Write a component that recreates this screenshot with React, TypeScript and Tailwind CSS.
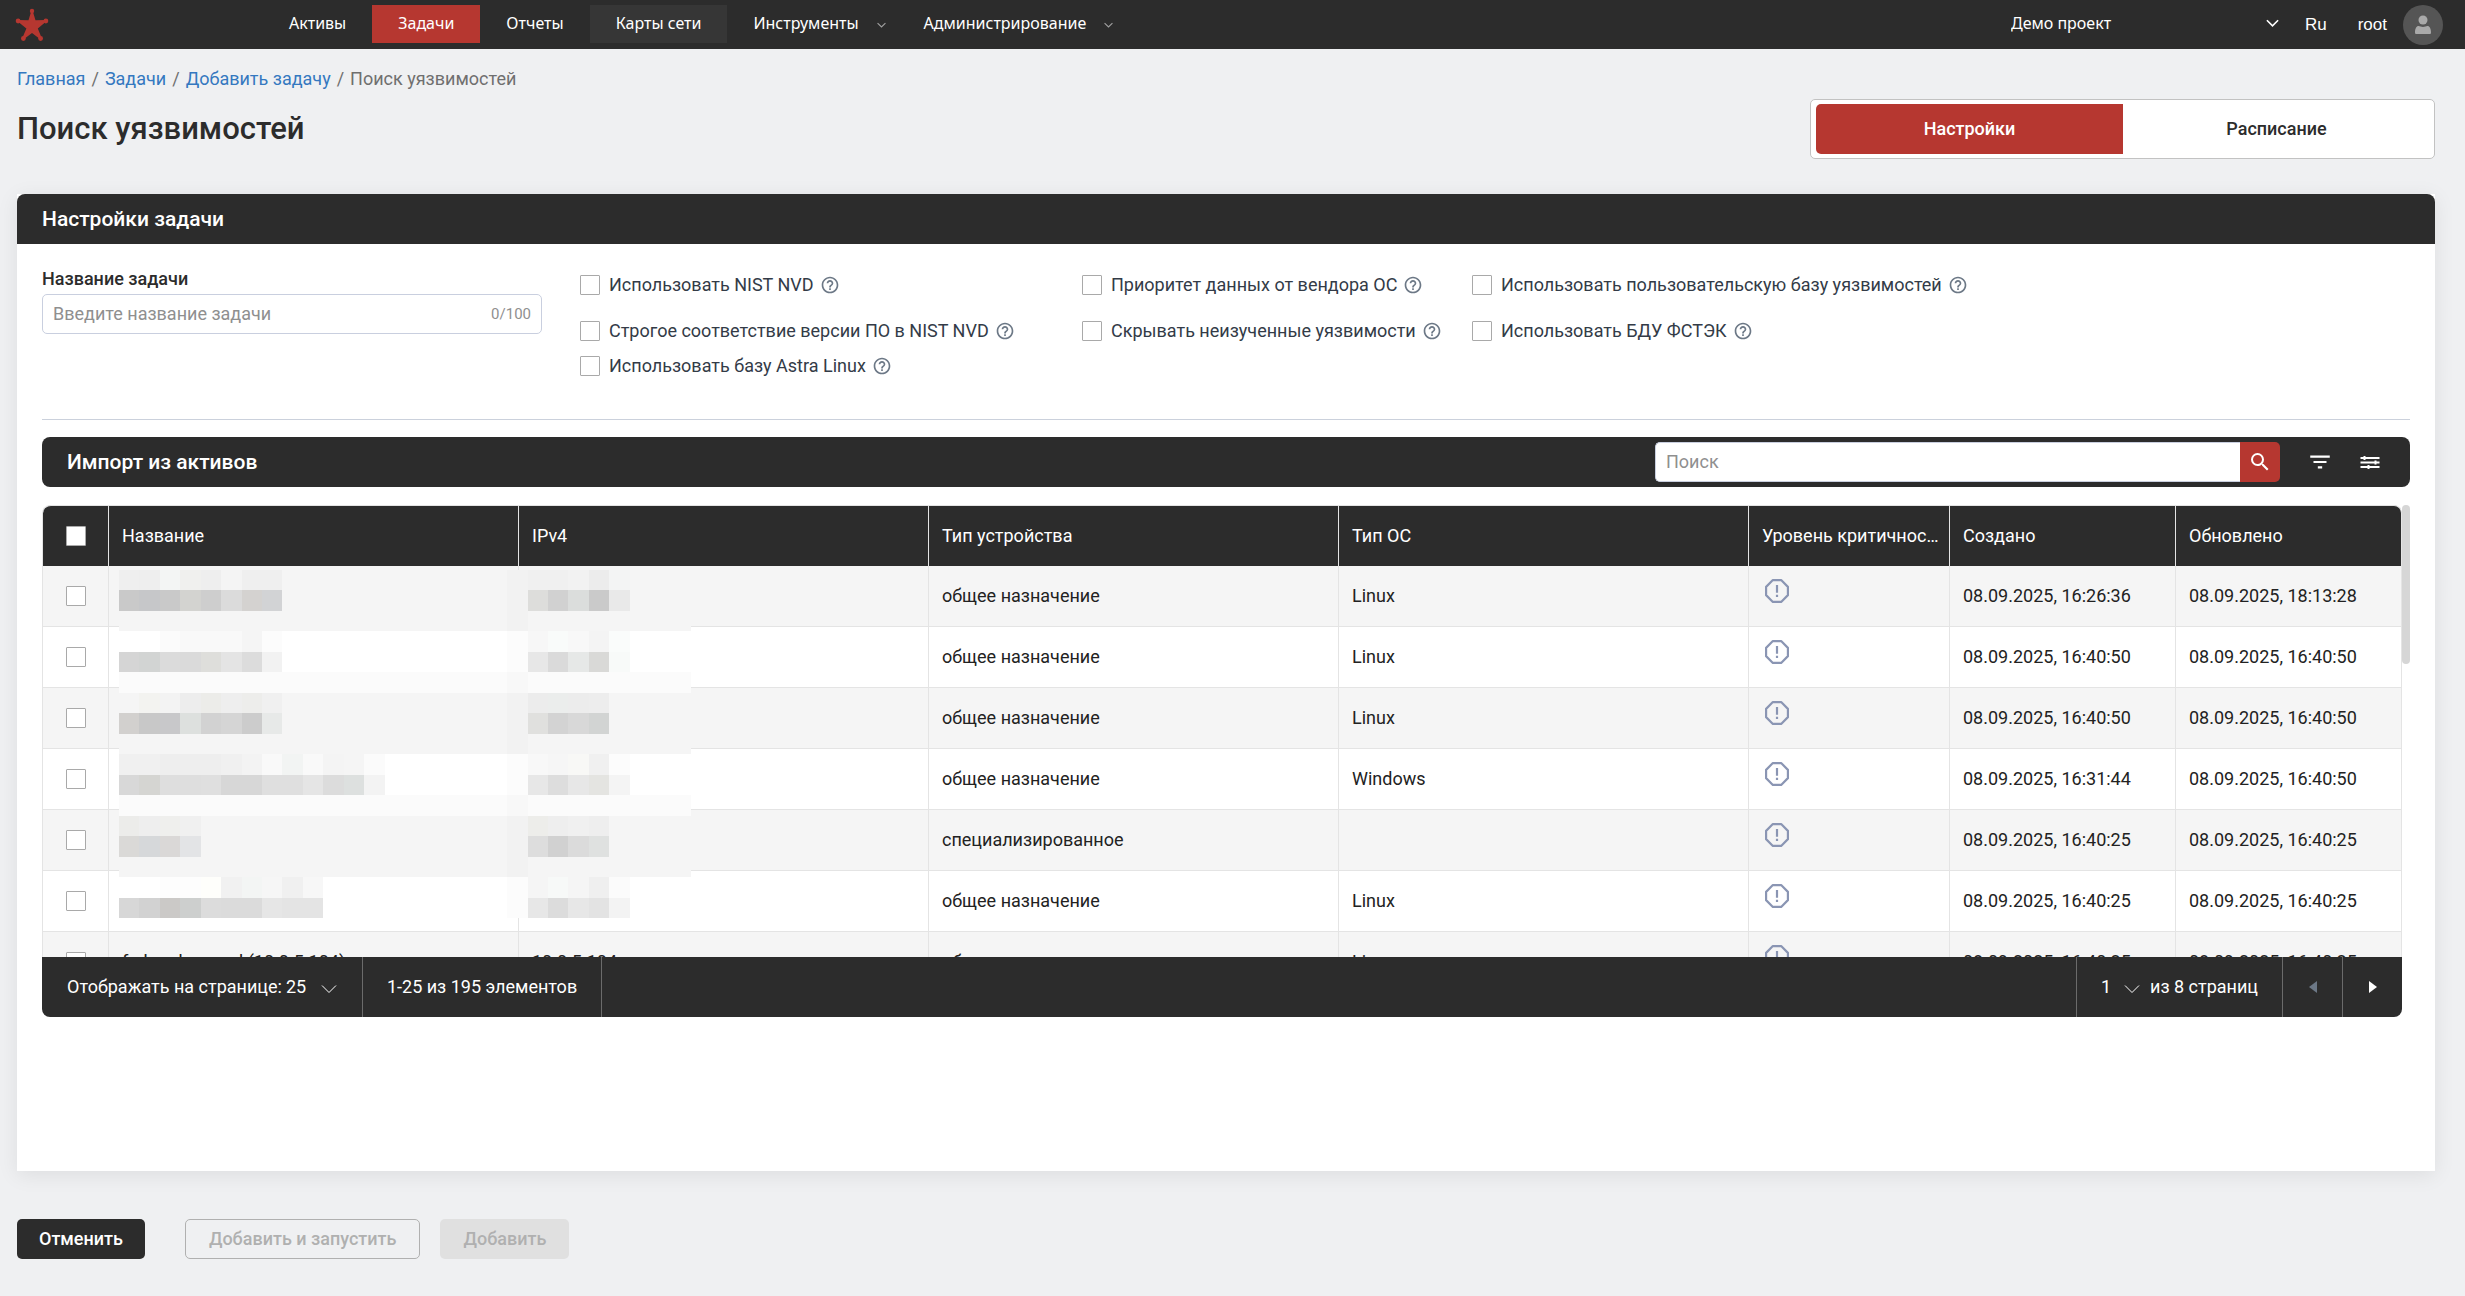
import React from 'react';
import { MdFilterList, MdHelpOutline, MdSearch } from 'react-icons/md';

type Asset = {
  name: string;
  ip: string;
  device: string;
  os: string;
  created: string;
  updated: string;
};

const assets: Asset[] = [
  { name: '', ip: '', device: 'общее назначение', os: 'Linux', created: '08.09.2025, 16:26:36', updated: '08.09.2025, 18:13:28' },
  { name: '', ip: '', device: 'общее назначение', os: 'Linux', created: '08.09.2025, 16:40:50', updated: '08.09.2025, 16:40:50' },
  { name: '', ip: '', device: 'общее назначение', os: 'Linux', created: '08.09.2025, 16:40:50', updated: '08.09.2025, 16:40:50' },
  { name: '', ip: '', device: 'общее назначение', os: 'Windows', created: '08.09.2025, 16:31:44', updated: '08.09.2025, 16:40:50' },
  { name: '', ip: '', device: 'специализированное', os: '', created: '08.09.2025, 16:40:25', updated: '08.09.2025, 16:40:25' },
  { name: '', ip: '', device: 'общее назначение', os: 'Linux', created: '08.09.2025, 16:40:25', updated: '08.09.2025, 16:40:25' },
  { name: 'fedora-bronzed (10.0.5.104)', ip: '10.0.5.104', device: 'общее назначение', os: 'Linux', created: '08.09.2025, 16:40:25', updated: '08.09.2025, 16:40:25' },
];

const columns = ['Название', 'IPv4', 'Тип устройства', 'Тип ОС', 'Уровень критичности', 'Создано', 'Обновлено'];

const checks = [
  'Использовать NIST NVD',
  'Приоритет данных от вендора ОС',
  'Использовать пользовательскую базу уязвимостей',
  'Строгое соответствие версии ПО в NIST NVD',
  'Скрывать неизученные уязвимости',
  'Использовать БДУ ФСТЭК',
  'Использовать базу Astra Linux',
];

// Privacy mosaic: [background, name tiles, address tiles] for every strip.
const mosaic: [string, string, string][] = [
  ['f5f5f5', 'efefef eeeeee f3f5f4 f0f0ee eeeeee f4f4f4 efefef efefef', 'f0f0f0 f0f0f0 f2f2f2 ececec f3f4f4'],
  ['f5f5f5', 'c9c9c9 c6c7c9 c9c9c9 d3d3d0 cecece dbdbdb d4d2d0 d2d3d5', 'dddddb d1d1d1 dbdddc cacaca e9e9e9'],
  ['f5f5f5', '', ''],
  ['ffffff', 'ffffff ffffff fbfbfb f9f9f9 f9f9f9 f9f9f9 f5f5f5 fcfcfc', 'f7f7f7 f9fbfa f8f8f8 f4f4f4 fafcfb'],
  ['ffffff', 'd5d5d5 d2d4d3 dbdbdb dadada dededb e4e4e4 dcdcdc f2f2f2', 'e7e7e7 dadada e6e8e7 d9d9d7 f8faf9'],
  ['fbfbfb', '', ''],
  ['f5f5f5', 'f5f5f5 f3f3f0 f3f3f3 ededed ecece9 eeeeee ededeb f0f0f0', 'ececec ebedec ececec ededed'],
  ['f5f5f5', 'd2d0ce c8c8c8 c8c8ca dde0de d2d2d2 d5d5d5 cccccc e7e9e8', 'e0e0de d3d3d3 d8d8d8 d2d4d3'],
  ['f5f5f5', '', ''],
  ['ffffff', 'f0f0f0 f0f0f0 eeeeee eeeeee eeeeee f0f0f0 f3f3f3 f9f9f9 f2f4f3 f9f9f9 f4f4f4 f5f5f5 fbfbfb', 'f8f8f8 f6f6f6 f8f8f6 f0f0f0 fcfcfc'],
  ['ffffff', 'd8d8d8 d5d5d2 dedede dedede dfdfdf d7d7d7 d7d7d7 dfdfdf dfdfdf e5e5e5 dcdcdc dde0df f3f3f3', 'e7e7e7 dddddd e7e7e7 e4e4e1 f4f4f4'],
  ['fbfbfb', '', ''],
  ['f5f5f5', 'ececea eeeeee efefed f0f0f0', 'ededea eeeeee f0f0f0 eeeeee'],
  ['f5f5f5', 'dad9d7 d6d8da dad8d7 e3e4e6', 'dddddd d1d1d1 dbdbdb dfe1e0'],
  ['f5f5f5', '', ''],
  ['ffffff', 'ffffff ffffff fdfdfd fdfdfd fefefb f1f1f1 f3f5f4 f6f6f6 f0f0f0 f7f7f7', 'f5f5f5 f7f9f8 f5f5f5 efefef fbfbfb'],
  ['ffffff', 'd7d7d7 d2d2d2 cbc9c7 cdcfce dcdcdc dbdbdb dbdbdb e6e6e6 e4e4e4 e4e4e4', 'e7e7e7 dcdcdc e7e7e7 e3e3e3 f3f3f3'],
];

function Mosaic() {
  return (
    <svg
      className="pointer-events-none absolute left-[77px] top-[65px] h-[348px] w-[572px]"
      viewBox="0 0 28 17"
      preserveAspectRatio="none"
      shapeRendering="crispEdges"
      aria-hidden="true"
    >
      {mosaic.map(([bg, names, ips], y) => (
        <g key={y}>
          <rect x={0} y={y} width={28} height={1} fill={'#' + bg} />
          <rect x={19} y={y} width={1} height={1} fill="#000" opacity={0.012} />
          {names.split(' ').filter(Boolean).map((c, x) => (
            <rect key={'n' + x} x={x} y={y} width={1} height={1} fill={'#' + c} />
          ))}
          {ips.split(' ').filter(Boolean).map((c, x) => (
            <rect key={'i' + x} x={20 + x} y={y} width={1} height={1} fill={'#' + c} />
          ))}
        </g>
      ))}
    </svg>
  );
}

function Chevron({ className, stroke = 1 }: { className: string; stroke?: number }) {
  return (
    <svg className={className} viewBox="0 0 16 10" fill="none" stroke="currentColor" strokeWidth={stroke} aria-hidden="true">
      <path d="M1 1.5 8 8.5 15 1.5" />
    </svg>
  );
}

function Logo() {
  return (
    <svg className="h-[34px] w-[34px] text-[#b63730]" viewBox="0 0 34 34" fill="currentColor" aria-hidden="true">
      <path d="M16.3 3h1.4l2.800 9.300 10.400-.2.3 1.500-8.400 6.900 4.200 10.200-1.400.9L17 25l-8.600 6.600-1.400-.9 4.400-10.200-8.600-6.900.4-1.500 10.300.2z" />
      <circle cx="17" cy="3" r="2.200" />
      <circle cx="3.100" cy="13" r="2.400" />
      <circle cx="30.900" cy="13" r="2.400" />
      <circle cx="8.400" cy="30.500" r="2.400" />
      <circle cx="25.600" cy="30.500" r="2.400" />
    </svg>
  );
}

function Octagon() {
  return (
    <svg className="h-6 w-6 text-[#8a95b3]" viewBox="1 1 22 22" fill="none" stroke="currentColor" strokeWidth="2" role="img" aria-label="Не определён">
      <path d="M8.200 2h7.600L22 8.200v7.600L15.800 22H8.200L2 15.800V8.200z" strokeLinejoin="round" />
      <path d="M12 6.500v7M12 15.500v2" />
    </svg>
  );
}

function Check({ label }: { label: string }) {
  return (
    <input
      type="checkbox"
      aria-label={label}
      className="block h-5 w-5 shrink-0 appearance-none rounded-[1px] border border-[#a9a9a9] bg-white checked:bg-[#b63730]"
    />
  );
}

function NavItem({ label, tone = '', menu = false }: { label: string; tone?: string; menu?: boolean }) {
  if (menu) {
    return (
      <button type="button" className="flex h-[38px] items-center gap-[18px] pb-[3px] pl-[26px] pr-3">
        {label}
        <Chevron className="mt-1 h-[6px] w-[9px] text-[#a0a0a0]" stroke={2} />
      </button>
    );
  }
  return (
    <a href="#" className={'flex h-[38px] items-center px-[26px] pb-[3px] ' + tone}>
      {label}
    </a>
  );
}

const cell = 'border-b border-r border-[#e4e4e4] px-[13px]';

export default function App() {
  return (
    <div className="min-h-screen bg-[#eff0f2] pb-9 font-['Roboto','Liberation_Sans',sans-serif] text-lg leading-6 text-[#2c2c2c]">
      <header className="flex h-[49px] items-center bg-[#2c2c2c] pl-[15px] pr-[22px] font-['Noto_Sans','Open_Sans',sans-serif] text-base text-white">
        <a href="#" aria-label="На главную">
          <Logo />
        </a>
        <nav className="ml-[214px] flex h-[39px] items-start">
          <NavItem label="Активы" />
          <NavItem label="Задачи" tone="bg-[#b63730]" />
          <NavItem label="Отчеты" />
          <NavItem label="Карты сети" tone="bg-[#363636]" />
          <NavItem label="Инструменты" menu />
          <NavItem label="Администрирование" menu />
        </nav>
        <div className="ml-auto flex items-center">
          <div className="relative flex w-[268px] items-center pb-[3px]">
            <select aria-label="Проект" className="w-full appearance-none bg-transparent">
              <option>Демо проект</option>
            </select>
            <Chevron className="pointer-events-none absolute right-0 h-2 w-[13px]" stroke={2} />
          </div>
          <div className="ml-[26px] flex items-center gap-[31px] font-['Liberation_Sans',sans-serif] text-[17px]">
            <button type="button">Ru</button>
            <span>root</span>
          </div>
          <button type="button" aria-label="Профиль" className="ml-[16px]">
            <svg className="h-10 w-10" viewBox="0 0 40 40" aria-hidden="true">
              <circle cx="20" cy="20" r="20" fill="#555" />
              <g fill="#a9a9a9">
                <circle cx="20" cy="15" r="4.500" />
                <path d="M12 27.500c0-4 1.500-6.500 3.500-6.500 1.500 0 2.500 1 4.500 1s3-1 4.500-1c2 0 3.500 2.500 3.500 6.500 0 1-.5 1.500-1.500 1.500h-13c-1 0-1.500-.5-1.500-1.500z" />
              </g>
            </svg>
          </button>
        </div>
      </header>

      <main className="pl-[17px] pr-[30px]">
        <nav aria-label="Навигация" className="flex gap-[6px] pt-[18px] text-[#6f6f6f]">
          <a href="#" className="text-[#3478c0]">Главная</a>
          <span>/</span>
          <a href="#" className="text-[#3478c0]">Задачи</a>
          <span>/</span>
          <a href="#" className="text-[#3478c0]">Добавить задачу</a>
          <span>/</span>
          <span>Поиск уязвимостей</span>
        </nav>

        <div className="mt-2 flex items-center justify-between">
          <h1 className="text-[31px] font-medium leading-9">Поиск уязвимостей</h1>
          <div className="flex h-[60px] w-[625px] rounded-[5px] border border-[#c2c2c2] bg-white p-1 pl-[5px] font-medium">
            <button type="button" className="flex-1 rounded-l-[5px] bg-[#b63730] text-white">Настройки</button>
            <button type="button" className="flex-1">Расписание</button>
          </div>
        </div>

        <section className="mt-[35px] bg-white pb-[154px] shadow-[0_4px_20px_rgba(0,0,0,0.08)]">
          <h2 className="flex h-[50px] items-center rounded-t-lg bg-[#2c2c2c] px-[25px] text-[21px] font-medium text-white">
            Настройки задачи
          </h2>
          <div className="px-[25px]">
            <div className="flex items-start border-b border-[#cbd1dc] pb-[41px]">
              <div className="w-[500px] pt-[23px]">
                <label htmlFor="task-name" className="block font-medium">Название задачи</label>
                <div className="mt-[3px] flex h-10 items-center rounded-[5px] border border-[#c9cfdf] bg-white px-[10px]">
                  <input id="task-name" placeholder="Введите название задачи" className="min-w-0 flex-1 bg-transparent outline-none placeholder:text-[#8f8f8f]" />
                  <span className="text-[15px] text-[#8f8f8f]">0/100</span>
                </div>
              </div>
              <div className="ml-[38px] grid flex-1 grid-cols-[502px_390px_1fr] grid-rows-[35px_24px_24px] items-start gap-y-[11px] pt-[29px] text-[#333b47]">
                {checks.map((c) => (
                  <div key={c} className="flex h-6 items-center gap-[6px]">
                    <label className="flex items-center gap-[9px]">
                      <Check label={c} />
                      {c}
                    </label>
                    <MdHelpOutline className="h-5 w-5 text-[#6c7886]" />
                  </div>
                ))}
              </div>
            </div>

            <div className="mt-[17px] flex h-[50px] items-center rounded-lg bg-[#2c2c2c] pl-[25px] pr-[27px] text-white">
              <h3 className="text-[21px] font-medium">Импорт из активов</h3>
              <form className="ml-auto flex h-10 w-[625px]">
                <input aria-label="Поиск" placeholder="Поиск" className="min-w-0 flex-1 rounded-l-[5px] border border-r-0 border-[#c9cfdf] bg-white px-[10px] text-[#2c2c2c] outline-none placeholder:text-[#8f8f8f]" />
                <button type="button" aria-label="Найти" className="flex w-10 items-center justify-center rounded-r-[5px] bg-[#b63730]">
                  <MdSearch className="h-6 w-6" />
                </button>
              </form>
              <button type="button" aria-label="Фильтр" className="ml-[27px]">
                <MdFilterList className="h-[26px] w-[26px]" />
              </button>
              <button type="button" aria-label="Настройки таблицы" className="ml-6">
                <svg className="h-[26px] w-[26px]" viewBox="0 0 26 26" stroke="currentColor" strokeWidth="2" aria-hidden="true">
                  <path d="M3.500 9h19M3.500 13.500h19M3.500 18h19" />
                  <path d="M7.500 7v4M18.500 11.500v4M11.500 16v4" />
                </svg>
              </button>
            </div>

            <div className="mt-[18px] flex">
              <div className="min-w-0 flex-1">
                <div className="relative h-[452px] overflow-hidden">
                  <table className="w-full table-fixed border-separate border-spacing-0 rounded-t-lg border-l border-[#e4e4e4] text-left">
                    <colgroup>
                      <col className="w-[66px]" />
                      <col />
                      <col />
                      <col />
                      <col />
                      <col className="w-[201px]" />
                      <col className="w-[226px]" />
                      <col className="w-[226px]" />
                    </colgroup>
                    <thead>
                      <tr className="h-[61px] text-white">
                        <th className="rounded-tl-lg border-r border-t border-[#e4e4e4] bg-[#2c2c2c] pl-[23px]">
                          <Check label="Выбрать все" />
                        </th>
                        {columns.map((c) => (
                          <th key={c} className="truncate border-r border-t border-[#e4e4e4] bg-[#2c2c2c] pl-[13px] pr-2 font-normal last:rounded-tr-lg">
                            {c}
                          </th>
                        ))}
                      </tr>
                    </thead>
                    <tbody className="text-[#222222]">
                      {assets.map((a, i) => (
                        <tr key={i} className="h-[61px] odd:bg-[#f5f5f5] even:bg-white">
                          <td className="border-b border-r border-[#e4e4e4] pl-[23px]">
                            <Check label={'Выбрать строку ' + (i + 1)} />
                          </td>
                          <td className={cell}>{a.name}</td>
                          <td className={cell}>{a.ip}</td>
                          <td className={cell}>{a.device}</td>
                          <td className={cell}>{a.os}</td>
                          <td className="border-b border-r border-[#e4e4e4] px-4 pb-[10px]">
                            <Octagon />
                          </td>
                          <td className={cell}>{a.created}</td>
                          <td className={cell}>{a.updated}</td>
                        </tr>
                      ))}
                    </tbody>
                  </table>
                  <Mosaic />
                </div>

                <div className="flex h-[60px] items-stretch rounded-b-lg bg-[#2c2c2c] text-white">
                  <label className="flex items-center gap-1 border-r border-[#6b6b6b] px-[25px]">
                    Отображать на странице:
                    <span className="relative flex items-center">
                      <select className="appearance-none bg-transparent pr-[30px]">
                        <option>25</option>
                      </select>
                      <Chevron className="pointer-events-none absolute right-0 mt-1 h-[10px] w-4" />
                    </span>
                  </label>
                  <div className="flex items-center border-r border-[#6b6b6b] px-6">1-25 из 195 элементов</div>
                  <label className="ml-auto flex items-center gap-[10px] border-l border-[#6b6b6b] px-6">
                    <span className="relative flex items-center">
                      <select aria-label="Страница" className="appearance-none bg-transparent pr-7">
                        <option>1</option>
                      </select>
                      <Chevron className="pointer-events-none absolute right-0 mt-1 h-[10px] w-4" />
                    </span>
                    из 8 страниц
                  </label>
                  <button type="button" aria-label="Предыдущая страница" disabled className="flex w-[60px] items-center justify-center border-l border-[#6b6b6b] text-[#6c7886]">
                    <svg className="h-3 w-2" viewBox="0 0 8 12" fill="currentColor" aria-hidden="true">
                      <path d="M8 0v12L0 6z" />
                    </svg>
                  </button>
                  <button type="button" aria-label="Следующая страница" className="flex w-[60px] items-center justify-center border-l border-[#6b6b6b]">
                    <svg className="h-3 w-2" viewBox="0 0 8 12" fill="currentColor" aria-hidden="true">
                      <path d="M0 0v12l8-6z" />
                    </svg>
                  </button>
                </div>
              </div>
              <div className="h-[159px] w-2 rounded-full bg-[#d6d6d6]" />
            </div>
          </div>
        </section>

        <div className="mt-12 flex font-medium">
          <button type="button" className="h-10 rounded-[5px] bg-[#2c2c2c] px-[22px] text-white">Отменить</button>
          <button type="button" disabled className="ml-10 h-10 rounded-[5px] border border-[#b0b0b0] px-[23px] text-[#b0b0b0]">Добавить и запустить</button>
          <button type="button" disabled className="ml-5 h-10 rounded-[5px] bg-[#e0e0e0] px-[23px] text-[#b0b0b0]">Добавить</button>
        </div>
      </main>
    </div>
  );
}
